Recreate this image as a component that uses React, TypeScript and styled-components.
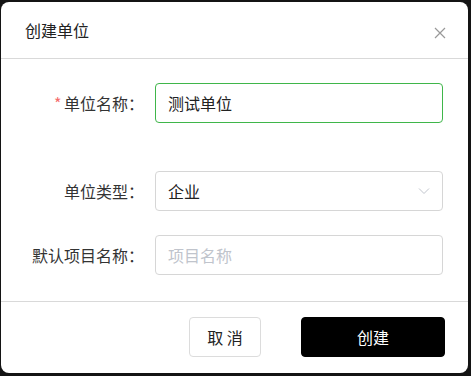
import styled, { createGlobalStyle } from 'styled-components';

const GlobalStyle = createGlobalStyle`
  html, body {
    margin: 0;
    padding: 0;
    background: #141414;
    font-family: "Noto Sans CJK SC", "Noto Sans", sans-serif;
  }
`;

const Backdrop = styled.div`
  width: 471px;
  height: 376px;
  padding: 2px 3px 3px 1px;
  box-sizing: border-box;
  background: #141414;
`;

const Dialog = styled.div`
  width: 467px;
  height: 371px;
  background: #fff;
  border-radius: 8px;
  display: flex;
  flex-direction: column;
  overflow: hidden;
`;

const Header = styled.div`
  height: 56px;
  display: flex;
  align-items: center;
  justify-content: space-between;
  padding: 0 20px 0 24px;
  border-bottom: 1px solid #d9d9d9;
  flex-shrink: 0;
`;

const Title = styled.div`
  font-size: 16px;
  color: #222;
  margin-top: -1px;
`;

const CloseButton = styled.button`
  border: none;
  background: none;
  padding: 0;
  width: 16px;
  height: 16px;
  margin-top: 6px;
  cursor: pointer;
  display: flex;
  align-items: center;
  justify-content: center;
`;

const Body = styled.div`
  flex: 1;
  padding: 24px 25px 0 0;
  display: flex;
  flex-direction: column;
`;

const Row = styled.div<{ $gap: number }>`
  display: grid;
  grid-template-columns: 154px 1fr;
  align-items: center;
  margin-bottom: ${p => p.$gap}px;
`;

const Label = styled.label`
  font-size: 16px;
  color: #333;
  text-align: right;
  padding-right: 11px;
  white-space: nowrap;
`;

const LabelText = styled.span`
  position: relative;
`;

// the asterisk sits in front of the label without pushing the text
const Required = styled.span`
  position: absolute;
  left: -10px;
  top: 0;
  color: #f56c6c;
`;

const Field = styled.div<{ $active?: boolean }>`
  height: 40px;
  box-sizing: border-box;
  border: 1px solid ${p => (p.$active ? '#3fb64a' : '#d6d6d6')};
  border-radius: 4px;
  display: flex;
  align-items: center;
  padding: 0 12px;
  font-size: 16px;
  color: #222;
  justify-content: space-between;
`;

const Placeholder = styled.span`
  color: #c0c4cc;
`;

const Footer = styled.div`
  height: 72px;
  border-top: 1px solid #d9d9d9;
  display: flex;
  align-items: flex-start;
  justify-content: flex-end;
  gap: 40px;
  padding: 15px 23px 0 0;
  box-sizing: border-box;
  flex-shrink: 0;
`;

const Button = styled.button<{ $primary?: boolean }>`
  height: 40px;
  width: ${p => (p.$primary ? 144 : 72)}px;
  border-radius: 4px;
  border: 1px solid ${p => (p.$primary ? '#000' : '#dcdcdc')};
  background: ${p => (p.$primary ? '#000' : '#fff')};
  color: ${p => (p.$primary ? '#fff' : '#222')};
  font-family: inherit;
  font-size: 16px;
  cursor: pointer;
  padding: 0;
`;

export default function App() {
  return (
    <>
      <GlobalStyle />
      <Backdrop>
        <Dialog>
          <Header>
            <Title>创建单位</Title>
            <CloseButton aria-label="close">
              <svg width="12" height="12" viewBox="0 0 12 12">
                <path d="M1 1L11 11M11 1L1 11" stroke="#999" strokeWidth="1.2" />
              </svg>
            </CloseButton>
          </Header>
          <Body>
            <Row $gap={48}>
              <Label>
                <LabelText>
                  <Required>*</Required>单位名称：
                </LabelText>
              </Label>
              <Field $active>测试单位</Field>
            </Row>
            <Row $gap={24}>
              <Label>单位类型：</Label>
              <Field>
                <span>企业</span>
                <svg width="12" height="8" viewBox="0 0 12 8">
                  <path d="M1 1.5L6 6.5L11 1.5" fill="none" stroke="#c0c4cc" strokeWidth="1" />
                </svg>
              </Field>
            </Row>
            <Row $gap={0}>
              <Label>默认项目名称：</Label>
              <Field>
                <Placeholder>项目名称</Placeholder>
              </Field>
            </Row>
          </Body>
          <Footer>
            <Button>取 消</Button>
            <Button $primary>创建</Button>
          </Footer>
        </Dialog>
      </Backdrop>
    </>
  );
}
